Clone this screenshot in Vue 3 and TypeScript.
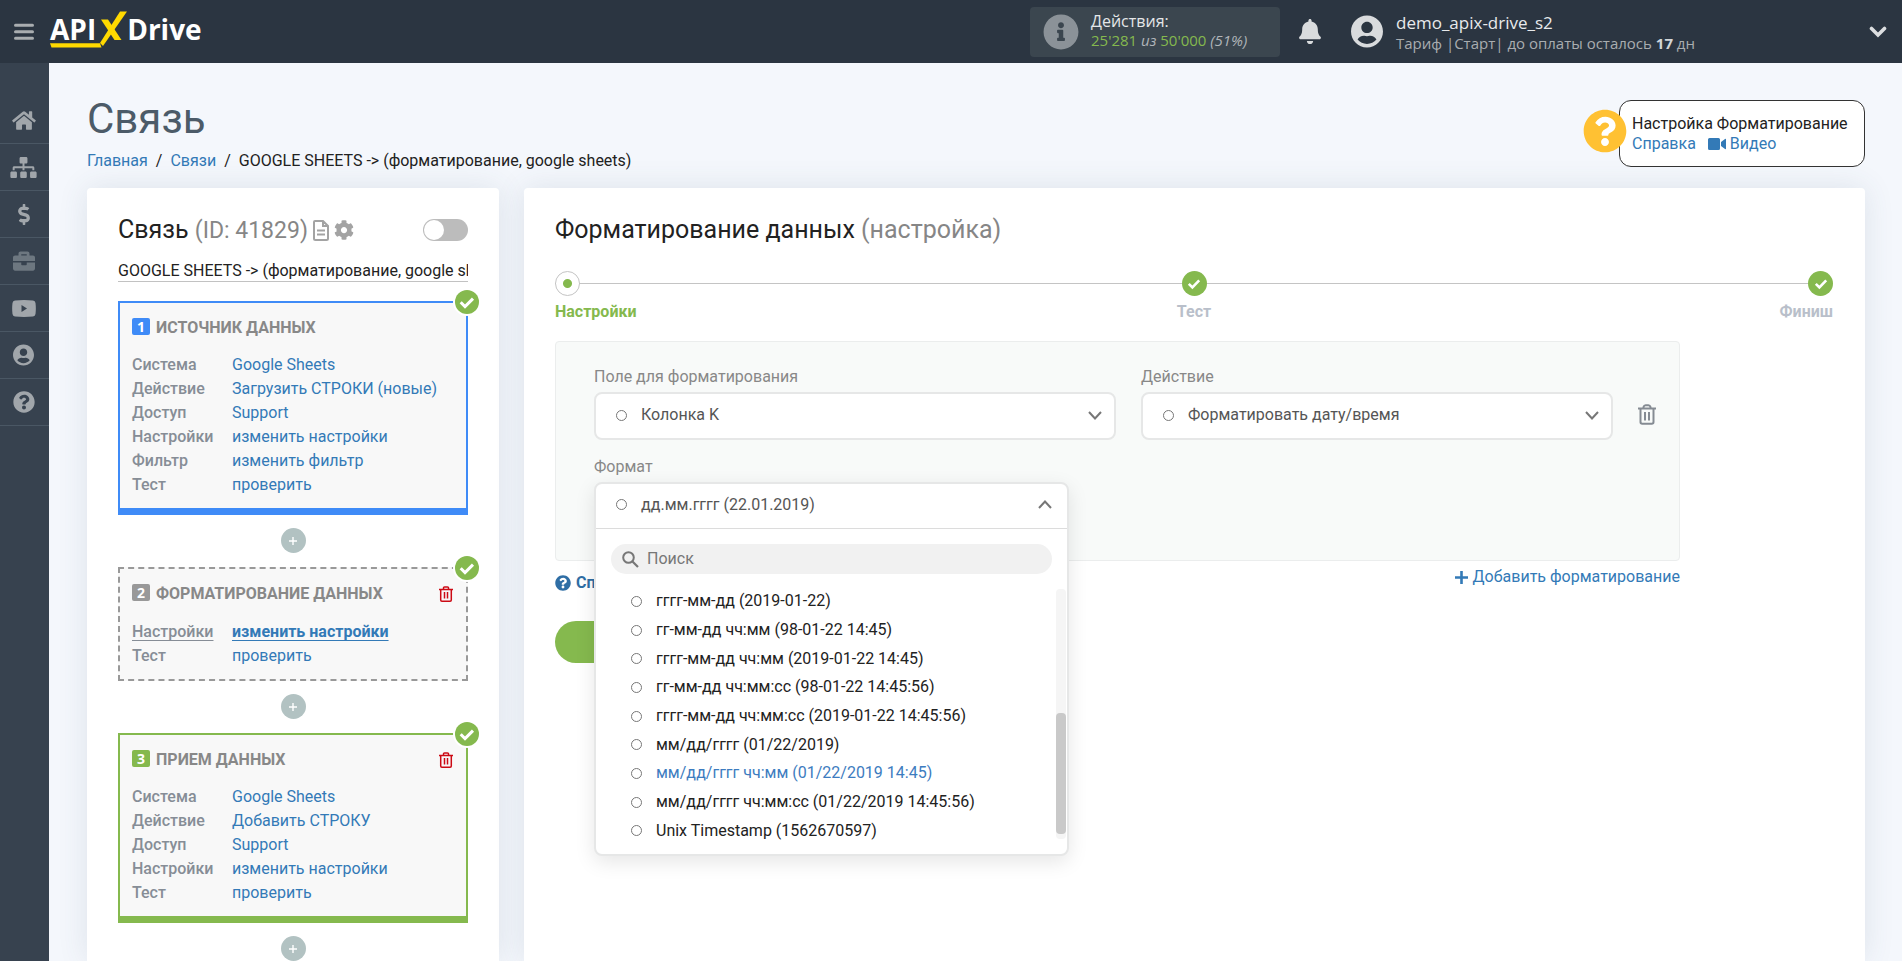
<script setup lang="ts">
import { ref } from 'vue'

interface Row { label: string; value: string; current?: boolean }
interface Block { n: number; kind: string; title: string; removable: boolean; rows: Row[] }

const blocks: Block[] = [
  {
    n: 1, kind: 'source', title: 'ИСТОЧНИК ДАННЫХ', removable: false,
    rows: [
      { label: 'Система', value: 'Google Sheets' },
      { label: 'Действие', value: 'Загрузить СТРОКИ (новые)' },
      { label: 'Доступ', value: 'Support' },
      { label: 'Настройки', value: 'изменить настройки' },
      { label: 'Фильтр', value: 'изменить фильтр' },
      { label: 'Тест', value: 'проверить' },
    ],
  },
  {
    n: 2, kind: 'format', title: 'ФОРМАТИРОВАНИЕ ДАННЫХ', removable: true,
    rows: [
      { label: 'Настройки', value: 'изменить настройки', current: true },
      { label: 'Тест', value: 'проверить' },
    ],
  },
  {
    n: 3, kind: 'target', title: 'ПРИЕМ ДАННЫХ', removable: true,
    rows: [
      { label: 'Система', value: 'Google Sheets' },
      { label: 'Действие', value: 'Добавить СТРОКУ' },
      { label: 'Доступ', value: 'Support' },
      { label: 'Настройки', value: 'изменить настройки' },
      { label: 'Тест', value: 'проверить' },
    ],
  },
]

const options: string[] = [
  'гггг-мм-дд (2019-01-22)',
  'гг-мм-дд чч:мм (98-01-22 14:45)',
  'гггг-мм-дд чч:мм (2019-01-22 14:45)',
  'гг-мм-дд чч:мм:сс (98-01-22 14:45:56)',
  'гггг-мм-дд чч:мм:сс (2019-01-22 14:45:56)',
  'мм/дд/гггг (01/22/2019)',
  'мм/дд/гггг чч:мм (01/22/2019 14:45)',
  'мм/дд/гггг чч:мм:сс (01/22/2019 14:45:56)',
  'Unix Timestamp (1562670597)',
]
const hovered = ref(6)
const search = ref('')
const enabled = ref(false)
const linkName = ref('GOOGLE SHEETS -> (форматирование, google sheets)')

interface NavItem { name: string; box: string; w: number; h: number; d: string; dim?: boolean }
const nav: NavItem[] = [
  { name: 'Главная', box: '0 0 576 512', w: 24, h: 21, d: 'M280.4 148.3L96 300.1V464a16 16 0 0 0 16 16l112.1-.3a16 16 0 0 0 15.9-16V368a16 16 0 0 1 16-16h64a16 16 0 0 1 16 16v95.600a16 16 0 0 0 16 16.100L464 480a16 16 0 0 0 16-16V300L295.700 148.300a12.200 12.200 0 0 0-15.300 0zM571.600 251.500L488 182.600V44.100a12 12 0 0 0-12-12h-56a12 12 0 0 0-12 12v72.600L318.500 43a48 48 0 0 0-61 0L4.300 251.500a12 12 0 0 0-1.600 16.900l25.500 31A12 12 0 0 0 45.200 301l235.200-193.700a12.200 12.200 0 0 1 15.300 0L530.900 301a12 12 0 0 0 16.900-1.600l25.500-31a12 12 0 0 0-1.700-16.900z' },
  { name: 'Связи', box: '0 0 640 512', w: 27, h: 21, d: 'M128 352H32c-17.700 0-32 14.300-32 32v96c0 17.700 14.300 32 32 32h96c17.700 0 32-14.300 32-32v-96c0-17.700-14.300-32-32-32zm-24-80h192v48h48v-48h192v48h48v-57.600c0-21.200-17.200-38.400-38.400-38.400H344v-64h40c17.700 0 32-14.300 32-32V32c0-17.700-14.300-32-32-32H256c-17.700 0-32 14.300-32 32v96c0 17.700 14.300 32 32 32h40v64H94.400C73.200 224 56 241.200 56 262.400V320h48v-48zm264 80h-96c-17.700 0-32 14.300-32 32v96c0 17.700 14.300 32 32 32h96c17.700 0 32-14.300 32-32v-96c0-17.700-14.300-32-32-32zm240 0h-96c-17.700 0-32 14.300-32 32v96c0 17.700 14.300 32 32 32h96c17.700 0 32-14.300 32-32v-96c0-17.700-14.300-32-32-32z' },
  { name: 'Оплата', box: '0 0 288 512', w: 12, h: 21, d: 'M209.200 233.400l-108-31.600C88.700 198.200 80 186.500 80 173.500c0-16.300 13.200-29.500 29.500-29.500h66.300c12.200 0 24.200 3.700 34.200 10.500 6.100 4.100 14.300 3.100 19.500-2l34.800-34c7.100-6.900 6.100-18.400-1.800-24.500C238 74.800 207.400 64.100 176 64V16c0-8.800-7.200-16-16-16h-32c-8.800 0-16 7.200-16 16v48h-2.500C45.800 64-5.400 118.700.5 183.600c4.200 46.100 39.400 83.600 83.800 96.600l102.500 30c12.500 3.700 21.200 15.300 21.200 28.300 0 16.300-13.200 29.500-29.500 29.500h-66.300C100 368 88 364.300 78 357.500c-6.100-4.100-14.300-3.100-19.500 2l-34.800 34c-7.100 6.900-6.100 18.400 1.800 24.500 24.500 19.200 55.100 29.900 86.500 30v48c0 8.800 7.200 16 16 16h32c8.800 0 16-7.200 16-16v-48.200c46.600-.9 90.300-28.600 105.700-72.700 21.500-61.600-14.600-124.800-72.500-141.700z' },
  { name: 'Проекты', box: '0 0 512 512', w: 22, h: 22, dim: true, d: 'M320 336c0 8.840-7.160 16-16 16h-96c-8.840 0-16-7.160-16-16v-48H0v144c0 25.600 22.400 48 48 48h416c25.600 0 48-22.400 48-48V288H320v48zm144-208h-80V80c0-25.600-22.400-48-48-48H176c-25.600 0-48 22.400-48 48v48H48c-25.600 0-48 22.400-48 48v80h512v-80c0-25.600-22.400-48-48-48zm-144 0H192V96h128v32z' },
  { name: 'Видео', box: '0 0 24 17', w: 24, h: 17, d: 'M3 .5Q12-.3 21 .5 23.200.8 23.500 3 24.200 8.500 23.500 14 23.200 16.200 21 16.500 12 17.300 3 16.500.8 16.200.5 14-.2 8.500.5 3 .8.800 3 .5zM9.500 5v7l5.500-3.500z' },
  { name: 'Профиль', box: '0 0 496 512', w: 21, h: 22, d: 'M248 8C111 8 0 119 0 256s111 248 248 248 248-111 248-248S385 8 248 8zm0 96c48.600 0 88 39.400 88 88s-39.400 88-88 88-88-39.400-88-88 39.400-88 88-88zm0 344c-58.700 0-111.300-26.600-146.500-68.200 18.800-35.400 55.600-59.800 98.500-59.800 2.400 0 4.800.4 7.100 1.100 13 4.200 26.600 6.900 40.900 6.900s28-2.700 40.900-6.900c2.300-.7 4.700-1.100 7.100-1.100 42.900 0 79.700 24.400 98.500 59.800C359.300 421.400 306.700 448 248 448z' },
  { name: 'Помощь', box: '0 0 512 512', w: 22, h: 22, d: 'M504 256c0 137-111 248-248 248S8 393 8 256C8 119.100 119 8 256 8s248 111.100 248 248zM262.700 90c-54.500 0-89.300 23-116.500 63.800-3.500 5.300-2.400 12.400 2.700 16.300l34.700 26.300c5.200 3.900 12.600 3 16.700-2.100 17.900-22.700 30.100-35.800 57.300-35.800 20.400 0 45.700 13.100 45.700 33 0 15-12.400 22.700-32.500 34C247.100 238.500 216 254.900 216 296v4c0 6.600 5.400 12 12 12h56c6.600 0 12-5.400 12-12v-1.300c0-28.500 83.200-29.600 83.200-106.700 0-58-60.200-102-116.500-102zM256 338c-25.400 0-46 20.600-46 46s20.600 46 46 46 46-20.600 46-46-20.600-46-46-46z' },
]
const userPath = nav[5].d
const helpPath = nav[6].d
const infoPath = 'M256 8C119 8 8 119 8 256s111 248 248 248 248-111 248-248S393 8 256 8zm0 110c23.200 0 42 18.800 42 42s-18.800 42-42 42-42-18.800-42-42 18.800-42 42-42zm56 254c0 6.600-5.400 12-12 12h-88c-6.600 0-12-5.400-12-12v-24c0-6.600 5.400-12 12-12h12v-64h-12c-6.600 0-12-5.400-12-12v-24c0-6.600 5.400-12 12-12h64c6.600 0 12 5.400 12 12v100h12c6.600 0 12 5.400 12 12v24z'
const steps = [
  { label: 'Настройки', state: 'now' },
  { label: 'Тест', state: 'done' },
  { label: 'Финиш', state: 'done' },
]
</script>

<template>
  <div class="page">
    <header class="top">
      <button class="burger" type="button" aria-label="Меню">
        <svg width="20" height="18" viewBox="0 0 20 18"><path d="M1.500 2.200h17M1.500 8.700h17M1.500 15.200h17" stroke="#a9adb0" stroke-width="3" stroke-linecap="round" /></svg>
      </button>
      <a class="logo" href="#" aria-label="APIXDrive">
        <span>API</span>
        <svg class="logo-x" width="28" height="38" viewBox="0 0 28 38"><path d="M2 9.500h7L22.500 30H15.500z" fill="#ffd900" /><path d="M21 1.500h7L4 36 1 33z" fill="#ffd900" /></svg>
        <span>Drive</span>
        <svg class="logo-line" width="52" height="5" viewBox="0 0 52 5"><path d="M0 .3h50l1.500 4.200H1.500z" fill="#ffd900" /></svg>
      </a>
      <div class="actions">
        <svg width="36" height="36" viewBox="0 0 512 512"><path :d="infoPath" fill="#8b9298" /></svg>
        <div>
          <div class="actions-title">Действия:</div>
          <div class="actions-sub"><b>25'281</b> <i>из</i> <b>50'000</b> <i>(51%)</i></div>
        </div>
      </div>
      <button class="bell" type="button" aria-label="Уведомления">
        <svg width="22" height="25" viewBox="0 0 448 512"><path fill="#d9dbdd" d="M224 512c35.300 0 64-28.700 64-64H160c0 35.300 28.600 64 64 64zm215.400-149.700c-19.300-20.800-55.500-52-55.500-154.300 0-77.700-54.500-139.900-127.900-155.200V32c0-17.700-14.300-32-32-32s-32 14.300-32 32v20.800C118.600 68.100 64.100 130.300 64.100 208c0 102.300-36.200 133.500-55.500 154.300C2.600 368.700 0 376.400 0 384c.1 16.400 13 32 32.100 32h383.800c19.100 0 32-15.600 32.100-32 0-7.600-2.700-15.300-8.600-21.700z" /></svg>
      </button>
      <div class="user">
        <svg width="32" height="33" viewBox="0 0 496 512"><path :d="userPath" fill="#d9dbdd" /></svg>
        <div>
          <div class="user-name">demo_apix-drive_s2</div>
          <div class="user-plan">Тариф |Старт| до оплаты осталось <b>17</b> дн</div>
        </div>
      </div>
      <button class="caret" type="button" aria-label="Открыть меню пользователя">
        <svg width="18" height="12" viewBox="0 0 18 12"><path d="M2.500 2.500L9 9l6.500-6.500" fill="none" stroke="#dcdee0" stroke-width="3.600" stroke-linecap="round" /></svg>
      </button>
    </header>

    <div class="shell">
      <nav class="side">
        <a v-for="item in nav" :key="item.name" href="#" :aria-label="item.name" :class="{ dim: item.dim }">
          <svg :width="item.w" :height="item.h" :viewBox="item.box"><path :d="item.d" fill="currentColor" fill-rule="evenodd" /></svg>
        </a>
      </nav>

      <main class="main">
        <div class="head">
          <div>
            <h1>Связь</h1>
            <div class="crumbs">
              <a href="#">Главная</a><span>/</span><a href="#">Связи</a><span>/</span>GOOGLE SHEETS -&gt; (форматирование, google sheets)
            </div>
          </div>
          <aside class="help">
            <svg class="help-mark" width="44" height="44" viewBox="0 0 512 512"><circle cx="256" cy="256" r="210" fill="#fff" /><path :d="helpPath" fill="#ffc133" /></svg>
            <div class="help-box">
              <div>Настройка Форматирование</div>
              <div class="help-links">
                <a href="#">Справка</a>
                <a href="#"><svg width="18" height="12" viewBox="0 0 18 12"><path fill="#337ab7" d="M1.500 0h9Q12 0 12 1.500v9Q12 12 10.500 12h-9Q0 12 0 10.500v-9Q0 0 1.500 0zM13 4l4-3q1-.5 1 .5v9q0 1-1 .5l-4-3z" /></svg>Видео</a>
              </div>
            </div>
          </aside>
        </div>

        <div class="columns">
          <section class="card flow">
            <div class="flow-head">
              <h2>Связь <span class="link-id">(ID: 41829)</span></h2>
              <button type="button" aria-label="Журнал"><svg width="16" height="21" viewBox="0 0 16 21"><path d="M2 1h8l5 5v12.500q0 1.500-1.500 1.500h-11Q1 20 1 18.500V2q0-1 1-1zM10 1v5h5M4 10.500h8M4 14.500h8" fill="none" stroke="#a3a3a3" stroke-width="2" /></svg></button>
              <button type="button" aria-label="Настройки связи"><svg width="20" height="20" viewBox="0 0 512 512"><path fill="#a3a3a3" d="M487.400 315.700l-42.600-24.600c4.300-23.200 4.300-47 0-70.200l42.600-24.600c4.900-2.800 7.100-8.600 5.500-14-11.100-35.600-30-67.800-54.700-94.600-3.800-4.100-10-5.100-14.800-2.300L380.800 110c-17.900-15.400-38.500-27.300-60.800-35.100V25.800c0-5.600-3.900-10.500-9.400-11.700-36.700-8.200-74.300-7.800-109.200 0-5.500 1.200-9.400 6.100-9.400 11.700V75c-22.200 7.900-42.800 19.800-60.800 35.100L88.700 85.500c-4.900-2.800-11-1.900-14.800 2.300-24.700 26.700-43.600 58.900-54.700 94.600-1.700 5.400.6 11.200 5.500 14L67.300 221c-4.300 23.200-4.300 47 0 70.200l-42.600 24.600c-4.900 2.800-7.100 8.600-5.500 14 11.100 35.600 30 67.800 54.700 94.600 3.800 4.100 10 5.100 14.800 2.300l42.600-24.600c17.900 15.400 38.500 27.300 60.800 35.100v49.200c0 5.600 3.900 10.500 9.400 11.700 36.700 8.200 74.300 7.800 109.200 0 5.500-1.200 9.400-6.100 9.400-11.700v-49.200c22.200-7.900 42.800-19.800 60.800-35.100l42.600 24.600c4.900 2.800 11 1.900 14.800-2.300 24.700-26.700 43.600-58.900 54.700-94.600 1.500-5.500-.7-11.300-5.600-14.100zM256 336c-44.100 0-80-35.900-80-80s35.900-80 80-80 80 35.900 80 80-35.900 80-80 80z" /></svg></button>
              <label class="toggle"><input v-model="enabled" type="checkbox" aria-label="Включить связь" /></label>
            </div>
            <input v-model="linkName" class="link-name" type="text" aria-label="Название связи" />

            <template v-for="b in blocks" :key="b.n">
              <article class="block" :class="b.kind">
                <svg class="ok" width="28" height="28" viewBox="0 0 28 28"><circle cx="14" cy="14" r="14" fill="#fff" /><circle cx="14" cy="14" r="12" fill="#85b94e" /><path d="M7.700 14.300l4.300 4.300 8-8" fill="none" stroke="#fff" stroke-width="3" /></svg>
                <h3><span class="num">{{ b.n }}</span>{{ b.title }}
                  <button v-if="b.removable" type="button" aria-label="Удалить блок">
                    <svg width="14" height="16" viewBox="0 0 14 16"><path d="M0 3.500h14M4.500 3V1.800Q4.500 1 5.500 1h3q1 0 1 .8V3M1.700 3.500V14q0 1.200 1.200 1.200h8.200q1.200 0 1.200-1.200V3.500M5.500 6v6.500M8.500 6v6.500" fill="none" stroke="#cc0a14" stroke-width="1.500" /></svg>
                  </button>
                </h3>
                <dl>
                  <div v-for="r in b.rows" :key="r.label" :class="{ current: r.current }"><dt>{{ r.label }}</dt><dd><a href="#">{{ r.value }}</a></dd></div>
                </dl>
              </article>
              <button class="add" type="button" aria-label="Добавить блок"><svg width="8" height="8" viewBox="0 0 8 8"><path d="M4 0v8M0 4h8" stroke="#fff" stroke-width="1.400" /></svg></button>
            </template>
          </section>

          <section class="card setup">
            <h2>Форматирование данных <span>(настройка)</span></h2>
            <ol class="steps">
              <li v-for="s in steps" :key="s.label" :class="s.state">
                <span class="dot"><svg v-if="s.state === 'done'" width="14" height="12" viewBox="0 0 14 12"><path d="M1.800 5.800l3.600 3.600 6.800-7" fill="none" stroke="#fff" stroke-width="2.600" /></svg></span>
                <b>{{ s.label }}</b>
              </li>
            </ol>

            <div class="work">
              <div class="panel">
                <div class="field field-a">
                  <label for="f-field">Поле для форматирования</label>
                  <button id="f-field" class="pick" type="button"><i class="ring"></i>Колонка K<svg width="14" height="9" viewBox="0 0 14 9"><path d="M1 1l6 6.500L13 1" fill="none" stroke="#777" stroke-width="2" /></svg></button>
                </div>
                <div class="field field-b">
                  <label for="f-action">Действие</label>
                  <button id="f-action" class="pick" type="button"><i class="ring"></i>Форматировать дату/время<svg width="14" height="9" viewBox="0 0 14 9"><path d="M1 1l6 6.500L13 1" fill="none" stroke="#777" stroke-width="2" /></svg></button>
                </div>
                <button class="trash" type="button" aria-label="Удалить форматирование">
                  <svg width="18" height="21" viewBox="0 0 18 21"><path d="M0 4.500h18M5.500 4V3Q6 1.200 7.600 1.200h2.800Q12 1.200 12.500 3v1M2.500 4.500V18q0 1.700 1.700 1.700h9.600q1.700 0 1.700-1.700V4.500M7 8v8.500M11 8v8.500" fill="none" stroke="#858b93" stroke-width="2" /></svg>
                </button>
                <div class="field field-c">
                  <label for="f-format">Формат</label>
                  <div class="drop">
                    <button id="f-format" class="drop-head" type="button" aria-expanded="true"><i class="ring"></i>дд.мм.гггг (22.01.2019)<svg width="14" height="9" viewBox="0 0 14 9"><path d="M1 8l6-6.500L13 8" fill="none" stroke="#777" stroke-width="2" /></svg></button>
                    <label class="search">
                      <svg width="17" height="17" viewBox="0 0 17 17"><circle cx="6.500" cy="6.500" r="5.300" fill="none" stroke="#777" stroke-width="2" /><path d="M10.500 10.500l5.500 5.500" stroke="#777" stroke-width="2.200" /></svg>
                      <input v-model="search" type="text" placeholder="Поиск" aria-label="Поиск" />
                    </label>
                    <div class="list">
                      <ul role="listbox" aria-label="Формат">
                        <li v-for="(o, i) in options" :key="o" role="option" :class="{ hover: i === hovered }" @mouseenter="hovered = i"><i class="ring"></i>{{ o }}</li>
                      </ul>
                      <div class="track"><div class="thumb"></div></div>
                    </div>
                  </div>
                </div>
              </div>
              <div class="under">
                <a class="docs" href="#"><svg width="16" height="16" viewBox="0 0 512 512"><path :d="helpPath" fill="#2f6ea5" /></svg>Справка</a>
                <a class="more" href="#"><svg width="13" height="13" viewBox="0 0 13 13"><path d="M6.500 0v13M0 6.500h13" stroke="#337ab7" stroke-width="2.600" /></svg>Добавить форматирование</a>
              </div>
              <button class="next" type="button" aria-label="Продолжить"></button>
            </div>
          </section>
        </div>
      </main>
    </div>
  </div>
</template>

<style>
html, body { margin: 0; background: #f4f7fc; overflow: hidden; }
</style>

<style scoped>
.page { font-family: Roboto, "Liberation Sans", sans-serif; font-size: 16px; line-height: 24px; color: #222; height: 100vh; overflow: hidden; display: flex; flex-direction: column; }
* { box-sizing: border-box; }
a { color: #337ab7; text-decoration: none; }
button { font: inherit; color: inherit; border: 0; background: none; padding: 0; cursor: pointer; }
svg { display: block; flex: none; }
h1, h2, h3, dl, dd, ol, ul { margin: 0; padding: 0; font-weight: 400; list-style: none; }

.top { height: 63px; flex: none; background: #2b3541; display: flex; align-items: center; padding: 0 15px 0 14px; font-family: "Open Sans", sans-serif; }
.burger { margin-right: 16px; }
.logo { position: relative; display: flex; align-items: center; height: 63px; padding-bottom: 5px; color: #fff; font: 700 28px/36px "Open Sans", sans-serif; }
.logo span { display: block; }
.logo-x { margin: 0 0 0 3px; }
.logo-line { position: absolute; left: 0; top: 43px; }
.actions { margin-left: auto; width: 250px; height: 50px; border-radius: 4px; background: #3b464f; display: flex; align-items: center; gap: 12px; padding: 0 13px; color: #e4e6e8; }
.actions > div { padding-bottom: 4px; }
.actions-title { font-size: 16px; line-height: 20px; }
.actions-sub { font-size: 15px; line-height: 18px; color: #b0b5b9; white-space: nowrap; }
.actions-sub b { font-weight: 400; color: #85b94e; }
.bell { margin: 0 30px 0 19px; }
.user { display: flex; align-items: center; gap: 13px; width: 518px; padding-top: 3px; }
.user > svg { margin-bottom: 4px; }
.user-name { font-size: 17px; line-height: 20px; color: #e8eaec; }
.user-plan { font-size: 15px; line-height: 20px; color: #a9adb0; white-space: nowrap; }
.user-plan b { color: #d2d5d8; }

.shell { flex: 1; min-height: 0; display: flex; }
.side { width: 49px; flex: none; background: #37424f; padding-top: 34px; }
.side a { display: flex; align-items: center; justify-content: center; height: 47px; padding-right: 2px; border-bottom: 1px solid #4a5764; color: #a1a6ab; }
.side a.dim { color: #6d7780; }

.main { flex: 1; min-width: 0; padding: 0 37px 0 38px; display: flex; flex-direction: column; }
.head { height: 125px; flex: none; display: flex; justify-content: space-between; }
h1 { font-size: 42px; line-height: 50px; color: #4c5b68; margin-top: 31px; }
.crumbs { margin-top: 5px; white-space: nowrap; }
.crumbs span { margin: 0 8px; }
.help { display: flex; align-items: flex-start; margin-top: 37px; }
.help-mark { margin: 9px -8px 0 0; z-index: 1; }
.help-box { min-width: 246px; height: 67px; border: 1px solid #333; border-radius: 12px; background: #fff; padding: 13px 12px; line-height: 20px; }
.help-links, .help-links a { display: flex; align-items: center; }
.help-links { gap: 12px; }
.help-links a { gap: 4px; }

.columns { flex: 1; min-height: 0; display: flex; gap: 25px; align-items: stretch; }
.card { background: #fff; border-radius: 4px 4px 0 0; box-shadow: 0 0 30px rgba(60, 80, 110, 0.12); }
.flow { width: 412px; flex: none; padding: 24px 31px 0; display: flex; flex-direction: column; align-items: stretch; }
.flow > * { flex: none; }
h2 { font-size: 25px; line-height: 36px; white-space: nowrap; }
h2 span { color: #868686; }
h2 .link-id { font-size: 23px; }
.flow-head { display: flex; align-items: center; gap: 5px; height: 36px; }
.toggle { margin-left: auto; display: flex; }
.toggle input { appearance: none; margin: 0; width: 45px; height: 22px; border-radius: 11px; background: #bcbcbc; display: flex; align-items: center; padding: 0 1px; }
.toggle input::before { content: ""; width: 20px; height: 20px; border-radius: 50%; background: #fff; }
.toggle input:checked { background: #85b94e; justify-content: flex-end; }
.link-name { font: inherit; color: #222; border: 0; border-bottom: 1px solid #c2c2c2; padding: 2px 0 0; height: 24px; margin: 10px 0 19px; background: none; outline: 0; }
.block { position: relative; background: #f8f8f8; border: 2px solid #3f8bf7; border-bottom-width: 7px; padding: 13px 12px 11px; --tone: #3f8bf7; }
.block.format { border: 2px dashed #999; --tone: #999; }
.block.target { border-color: #85b94e; --tone: #85b94e; }
.ok { position: absolute; right: -15px; top: -15px; }
h3 { display: flex; align-items: center; font-weight: 700; font-size: 16px; line-height: 24px; color: #888; margin-bottom: 13px; }
.format h3 { margin-bottom: 14px; }
h3 button { margin: 0 1px 0 auto; }
.num { width: 18px; height: 17px; border-radius: 2px; background: var(--tone); color: #fff; font: 700 14px/17px "Open Sans", sans-serif; text-align: center; margin: 0 6px 3px 0; }
dl div { display: flex; }
dt { width: 100px; font-weight: 500; color: #868d96; }
.current dt, .current a { text-decoration: underline; text-underline-offset: 3px; }
.current a { font-weight: 700; }
.add { width: 25px; height: 25px; border-radius: 50%; background: #b2c2c2; align-self: center; margin: 13px 0 14px; display: flex; align-items: center; justify-content: center; }

.setup { flex: 1; min-width: 0; padding: 24px 32px 0 31px; }
.steps { display: flex; justify-content: space-between; margin-top: 23px; background: linear-gradient(#c4c4c4, #c4c4c4) 0 12px / 100% 1px no-repeat; }
.steps li { flex: 1; display: flex; flex-direction: column; align-items: center; gap: 4px; color: #b9bfca; }
.steps li:first-child { align-items: flex-start; color: #85b94e; }
.steps li:last-child { align-items: flex-end; }
.dot { width: 25px; height: 25px; border-radius: 50%; background: #85b94e; display: flex; align-items: center; justify-content: center; }
.now .dot { background: radial-gradient(circle, #85b94e 4px, #fff 5px); border: 1px solid #c4c4c4; }

.work { width: 88%; min-width: 1125px; margin-top: 17px; }
.panel { height: 220px; border: 1px solid #ebeded; border-radius: 4px; background: #f8faf9; padding: 23px 22px 0 38px; display: grid; grid-template-columns: 522fr 472fr 19px; column-gap: 25px; grid-template-rows: 90px auto; align-items: start; }
.field { display: flex; flex-direction: column; }
.field > label { color: #888; line-height: 24px; margin-bottom: 3px; }
.pick, .drop-head { display: flex; align-items: center; gap: 14px; padding: 0 12px 2px 20px; color: #555; width: 100%; text-align: left; }
.pick { height: 48px; background: #fff; border: 2px solid #e6e7e7; border-radius: 8px; }
.pick svg, .drop-head svg { margin-left: auto; }
.ring { width: 11px; height: 11px; border: 1px solid #777; border-radius: 50%; flex: none; }
.trash { margin-top: 39px; }
.field-c { width: 475px; }
.drop { position: relative; z-index: 2; background: #fff; border: 2px solid #e6e7e7; border-radius: 8px; box-shadow: 0 6px 20px rgba(0, 0, 0, 0.1); }
.drop-head { height: 45px; border-bottom: 1px solid #dcdcdc; padding: 0 15px 3px 20px; }
.search { display: flex; align-items: center; gap: 8px; margin: 15px 15px 13px; height: 30px; padding: 0 11px; border-radius: 15px; background: #f1f1f1; }
.search input { flex: 1; min-width: 0; border: 0; outline: 0; background: none; font: inherit; padding: 0; color: #555; }
.search input::placeholder { color: #777; opacity: 1; }
.list { display: flex; height: 267px; }
.list ul { flex: 1; height: 258px; display: flex; flex-direction: column; padding-left: 35px; }
.list li { flex: 1; display: flex; align-items: center; gap: 14px; }
.list li.hover { color: #3d7cc0; }
.track { width: 10px; height: 250px; margin: 2px 1px 0 0; border-radius: 4px; background: #f5f5f5; padding-top: 124px; }
.thumb { height: 121px; border-radius: 4px; background: #c9c9c9; }
.under { display: flex; justify-content: space-between; align-items: flex-start; padding-top: 4px; }
.under a { display: flex; align-items: center; gap: 5px; }
.docs { margin-top: 6px; font-weight: 700; color: #2f6ea5; }
.next { display: block; margin-top: 26px; width: 180px; height: 42px; border-radius: 21px; background: #85b94e; }
</style>
